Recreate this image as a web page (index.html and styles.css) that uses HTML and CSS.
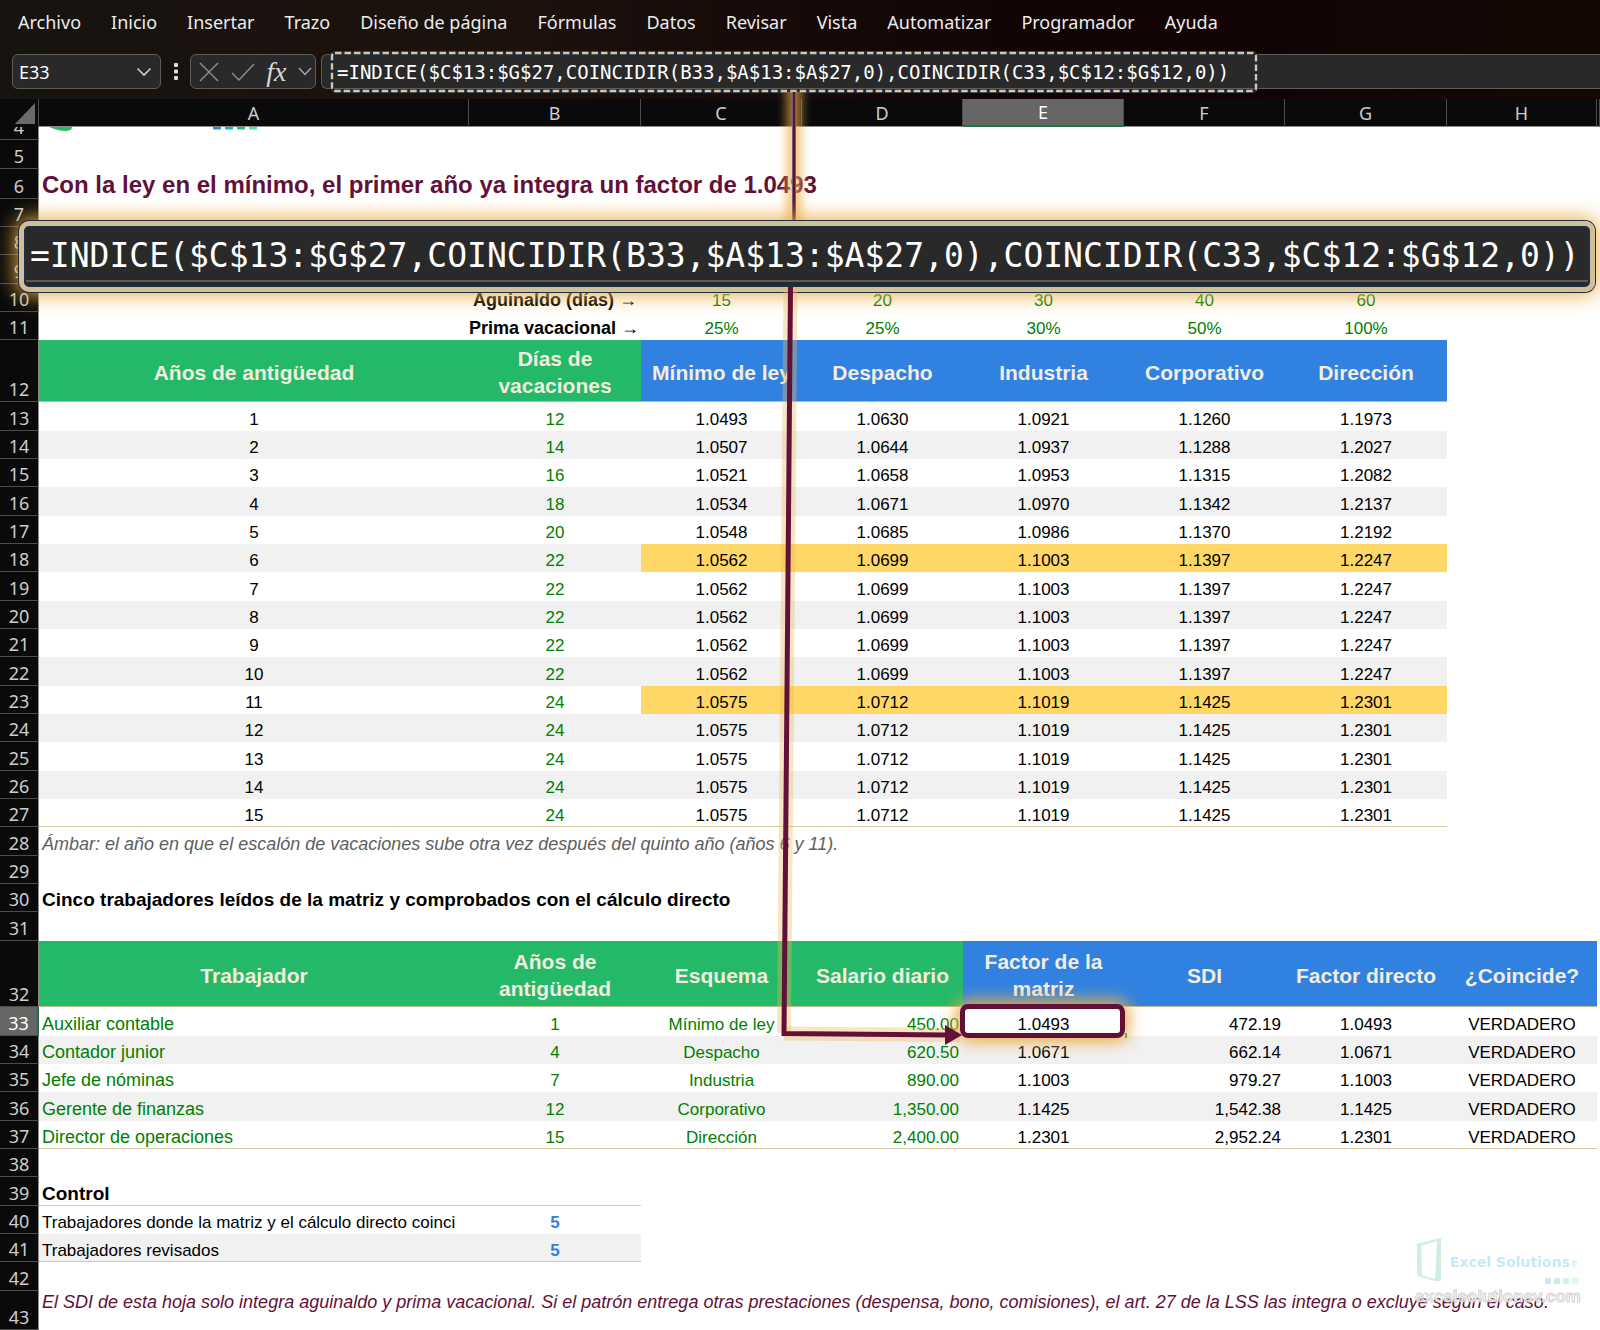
FILE: index.html
```html
<!DOCTYPE html>
<html lang="es">
<head>
<meta charset="utf-8">
<meta name="viewport" content="width=device-width, initial-scale=1">
<title>Factor de integración</title>
<link rel="stylesheet" href="styles.css">
</head>
<body>
<header class="chrome">
  <nav class="menu" aria-label="Cinta de opciones">
    <a href="#">Archivo</a><a href="#">Inicio</a><a href="#">Insertar</a><a href="#">Trazo</a><a href="#">Diseño de página</a><a href="#">Fórmulas</a><a href="#">Datos</a><a href="#">Revisar</a><a href="#">Vista</a><a href="#">Automatizar</a><a href="#">Programador</a><a href="#">Ayuda</a>
  </nav>
  <div class="bar">
    <div class="box namebox">
      <input class="name-input" type="text" value="E33" aria-label="Cuadro de nombres">
      <button class="tool" type="button" aria-label="Lista de nombres"><svg width="16" height="10" viewBox="0 0 16 10"><path d="M1.500 1.500 8 8 14.500 1.500" fill="none" stroke="#cfcfcf" stroke-width="1.600"/></svg></button>
    </div>
    <svg class="dots" width="4" height="18" viewBox="0 0 4 18" fill="#dcdcdc"><rect width="4" height="4" rx="1"/><rect y="6.500" width="4" height="4" rx="1"/><rect y="13" width="4" height="4" rx="1"/></svg>
    <div class="box actions">
      <button class="tool" type="button" aria-label="Cancelar"><svg width="20" height="20" viewBox="0 0 20 20"><path d="M1 1 19 19M19 1 1 19" stroke="#8f8f8f" stroke-width="1.400"/></svg></button>
      <button class="tool" type="button" aria-label="Introducir"><svg width="24" height="18" viewBox="0 0 24 18"><path d="M1 10 8 17 23 1" fill="none" stroke="#8f8f8f" stroke-width="1.400"/></svg></button>
      <button class="tool fx" type="button" aria-label="Insertar función">fx</button>
      <button class="tool" type="button" aria-label="Más funciones"><svg width="14" height="9" viewBox="0 0 14 9"><path d="M1 1 7 7.500 13 1" fill="none" stroke="#a5a5a5" stroke-width="1.500"/></svg></button>
    </div>
    <div class="box formula">
      <input class="formula-input" type="text" aria-label="Barra de fórmulas" value="=INDICE($C$13:$G$27,COINCIDIR(B33,$A$13:$A$27,0),COINCIDIR(C33,$C$12:$G$12,0))">
      <svg class="marquee" width="928" height="42" viewBox="0 0 928 42" fill="none"><rect x="2" y="2" width="924" height="38" rx="3" stroke="#1c2a40" stroke-width="4"/><rect x="2" y="2" width="924" height="38" rx="3" stroke="#d9c6a0" stroke-width="2.400" stroke-dasharray="6.500 3"/></svg>
    </div>
  </div>
</header>

<main class="sheet">
<table class="grid">
  <colgroup><col class="c-num"><col class="c-a"><col class="c-b"><col class="c-m"><col class="c-m"><col class="c-m"><col class="c-m"><col class="c-g"><col class="c-h"><col></colgroup>
  <thead>
    <tr><th class="corner"><svg width="20" height="21" viewBox="0 0 20 21"><path d="M20 0V21H0Z" fill="#6a6a6a"/></svg></th><th>A</th><th>B</th><th>C</th><th>D</th><th class="on">E</th><th>F</th><th>G</th><th>H</th><th></th></tr>
  </thead>
  <tbody>
    <tr class="cut"><th scope="row"><div class="clip">4</div></th><td class="l"><div class="clip"><svg width="220" height="5" viewBox="0 0 220 5"><path d="M7 0H30Q30 4 23 4Q17 4 7 0Z" fill="#25b968"/><path d="M171 0h8v1.500q0 1-1 1h-6q-1 0-1-1Z" fill="#3284e0"/><path d="M183 0h8v1.500q0 1-1 1h-6q-1 0-1-1Z" fill="#18b4bd"/><path d="M195 0h8v1.500q0 1-1 1h-6q-1 0-1-1Z" fill="#25b884"/><path d="M207 0h8v1.500q0 1-1 1h-6q-1 0-1-1Z" fill="#48ee92"/></svg></div></td><td colspan="8"></td></tr>
    <tr class="t"><th scope="row">5</th><td colspan="9"></td></tr>
    <tr class="title"><th scope="row">6</th><td class="l" colspan="9">Con la ley en el mínimo, el primer año ya integra un factor de 1.0493</td></tr>
    <tr><th scope="row">7</th><td colspan="9"></td></tr>
    <tr><th scope="row">8</th><td colspan="9"></td></tr>
    <tr class="t"><th scope="row">9</th><td colspan="9"></td></tr>
    <tr class="param"><th scope="row">10</th><td></td><td class="label">Aguinaldo (días) <span>→</span></td><td>15</td><td>20</td><td>30</td><td>40</td><td>60</td><td></td><td></td></tr>
    <tr class="param"><th scope="row">11</th><td></td><td class="label">Prima vacacional <span>→</span></td><td>25%</td><td>25%</td><td>30%</td><td>50%</td><td>100%</td><td></td><td></td></tr>
    <tr class="head head-12"><th scope="row">12</th><td class="hg">Años de antigüedad</td><td class="hg">Días de vacaciones</td><td class="hb">Mínimo de ley</td><td class="hb">Despacho</td><td class="hb">Industria</td><td class="hb">Corporativo</td><td class="hb">Dirección</td><td></td><td></td></tr>
    <tr class="t m"><th scope="row">13</th><td>1</td><td>12</td><td>1.0493</td><td>1.0630</td><td>1.0921</td><td>1.1260</td><td>1.1973</td><td></td><td></td></tr>
    <tr class="m z"><th scope="row">14</th><td>2</td><td>14</td><td>1.0507</td><td>1.0644</td><td>1.0937</td><td>1.1288</td><td>1.2027</td><td></td><td></td></tr>
    <tr class="m"><th scope="row">15</th><td>3</td><td>16</td><td>1.0521</td><td>1.0658</td><td>1.0953</td><td>1.1315</td><td>1.2082</td><td></td><td></td></tr>
    <tr class="t m z"><th scope="row">16</th><td>4</td><td>18</td><td>1.0534</td><td>1.0671</td><td>1.0970</td><td>1.1342</td><td>1.2137</td><td></td><td></td></tr>
    <tr class="m"><th scope="row">17</th><td>5</td><td>20</td><td>1.0548</td><td>1.0685</td><td>1.0986</td><td>1.1370</td><td>1.2192</td><td></td><td></td></tr>
    <tr class="m z amber"><th scope="row">18</th><td>6</td><td>22</td><td>1.0562</td><td>1.0699</td><td>1.1003</td><td>1.1397</td><td>1.2247</td><td></td><td></td></tr>
    <tr class="t m"><th scope="row">19</th><td>7</td><td>22</td><td>1.0562</td><td>1.0699</td><td>1.1003</td><td>1.1397</td><td>1.2247</td><td></td><td></td></tr>
    <tr class="m z"><th scope="row">20</th><td>8</td><td>22</td><td>1.0562</td><td>1.0699</td><td>1.1003</td><td>1.1397</td><td>1.2247</td><td></td><td></td></tr>
    <tr class="m"><th scope="row">21</th><td>9</td><td>22</td><td>1.0562</td><td>1.0699</td><td>1.1003</td><td>1.1397</td><td>1.2247</td><td></td><td></td></tr>
    <tr class="t m z"><th scope="row">22</th><td>10</td><td>22</td><td>1.0562</td><td>1.0699</td><td>1.1003</td><td>1.1397</td><td>1.2247</td><td></td><td></td></tr>
    <tr class="m amber"><th scope="row">23</th><td>11</td><td>24</td><td>1.0575</td><td>1.0712</td><td>1.1019</td><td>1.1425</td><td>1.2301</td><td></td><td></td></tr>
    <tr class="m z"><th scope="row">24</th><td>12</td><td>24</td><td>1.0575</td><td>1.0712</td><td>1.1019</td><td>1.1425</td><td>1.2301</td><td></td><td></td></tr>
    <tr class="t m"><th scope="row">25</th><td>13</td><td>24</td><td>1.0575</td><td>1.0712</td><td>1.1019</td><td>1.1425</td><td>1.2301</td><td></td><td></td></tr>
    <tr class="m z"><th scope="row">26</th><td>14</td><td>24</td><td>1.0575</td><td>1.0712</td><td>1.1019</td><td>1.1425</td><td>1.2301</td><td></td><td></td></tr>
    <tr class="m end"><th scope="row">27</th><td>15</td><td>24</td><td>1.0575</td><td>1.0712</td><td>1.1019</td><td>1.1425</td><td>1.2301</td><td class="open"></td><td class="open"></td></tr>
    <tr class="t"><th scope="row">28</th><td class="l note" colspan="9">Ámbar: el año en que el escalón de vacaciones sube otra vez después del quinto año (años 6 y 11).</td></tr>
    <tr><th scope="row">29</th><td colspan="9"></td></tr>
    <tr><th scope="row">30</th><td class="l sub" colspan="9">Cinco trabajadores leídos de la matriz y comprobados con el cálculo directo</td></tr>
    <tr class="t"><th scope="row">31</th><td colspan="9"></td></tr>
    <tr class="head head-32"><th scope="row">32</th><td class="hg">Trabajador</td><td class="hg">Años de antigüedad</td><td class="hg">Esquema</td><td class="hg">Salario diario</td><td class="hb">Factor de la matriz</td><td class="hb">SDI</td><td class="hb">Factor directo</td><td class="hb">¿Coincide?</td><td></td></tr>
    <tr class="t w on"><th scope="row">33</th><td>Auxiliar contable</td><td>1</td><td>Mínimo de ley</td><td>450.00</td><td>1.0493</td><td>472.19</td><td>1.0493</td><td>VERDADERO</td><td></td></tr>
    <tr class="w z"><th scope="row">34</th><td>Contador junior</td><td>4</td><td>Despacho</td><td>620.50</td><td>1.0671</td><td>662.14</td><td>1.0671</td><td>VERDADERO</td><td></td></tr>
    <tr class="w"><th scope="row">35</th><td>Jefe de nóminas</td><td>7</td><td>Industria</td><td>890.00</td><td>1.1003</td><td>979.27</td><td>1.1003</td><td>VERDADERO</td><td></td></tr>
    <tr class="t w z"><th scope="row">36</th><td>Gerente de finanzas</td><td>12</td><td>Corporativo</td><td>1,350.00</td><td>1.1425</td><td>1,542.38</td><td>1.1425</td><td>VERDADERO</td><td></td></tr>
    <tr class="w end"><th scope="row">37</th><td>Director de operaciones</td><td>15</td><td>Dirección</td><td>2,400.00</td><td>1.2301</td><td>2,952.24</td><td>1.2301</td><td>VERDADERO</td><td class="open"></td></tr>
    <tr><th scope="row">38</th><td colspan="9"></td></tr>
    <tr class="t end"><th scope="row">39</th><td class="l sub">Control</td><td></td><td class="open" colspan="7"></td></tr>
    <tr class="k"><th scope="row">40</th><td class="l">Trabajadores donde la matriz y el cálculo directo coinci</td><td class="count">5</td><td colspan="7"></td></tr>
    <tr class="k z end"><th scope="row">41</th><td class="l">Trabajadores revisados</td><td class="count">5</td><td class="open" colspan="7"></td></tr>
    <tr class="t"><th scope="row">42</th><td colspan="9"></td></tr>
    <tr class="last"><th scope="row">43</th><td class="l warn" colspan="9">El SDI de esta hoja solo integra aguinaldo y prima vacacional. Si el patrón entrega otras prestaciones (despensa, bono, comisiones), el art. 27 de la LSS las integra o excluye según el caso.</td></tr>
  </tbody>
</table>

<svg class="arrow" width="1000" height="980" viewBox="0 92 1000 980" aria-hidden="true">
  <defs><filter id="soft" filterUnits="userSpaceOnUse" x="760" y="80" width="70" height="160"><feGaussianBlur stdDeviation="5 0"/></filter></defs>
  <path d="M794 92V221" stroke="#e9ae48" stroke-opacity=".65" stroke-width="16" filter="url(#soft)"/>
  <path d="M794 92V221" stroke="#72757c" stroke-width="4"/>
  <path d="M794 92V221" stroke="#621038" stroke-width="2.400"/>
</svg>
<div class="callout">=INDICE($C$13:$G$27,COINCIDIR(B33,$A$13:$A$27,0),COINCIDIR(C33,$C$12:$G$12,0))</div>
<div class="pick"></div>
<svg class="arrow" width="1000" height="980" viewBox="0 92 1000 980" aria-hidden="true">
  <path d="M790.500 287 784 1033" stroke="#e9b85c" stroke-opacity=".36" stroke-width="14"/>
  <path d="M784 1033.500 960 1035" stroke="#e9b85c" stroke-opacity=".36" stroke-width="14"/>
  <path d="M790.500 287 784 1033.500 948 1035" fill="none" stroke="#621038" stroke-width="5"/>
  <path d="M945 1025 962 1035 945 1045Z" fill="#621038"/>
</svg>
<div class="mark">
  <svg width="30" height="46" viewBox="0 0 30 46"><path d="M1 8 29 1 26 3V44Q24 46 20 45L2 40V9ZM6 10 7 39 20 43 22 5Z" fill="#cdeedd" fill-rule="evenodd"/></svg>
  <div class="brand"><div class="brand-name">Excel Solutions<small>®</small></div><svg width="33" height="6" viewBox="0 0 33 6"><rect width="6" height="6" rx="1" fill="#cfe0f8"/><rect x="9" width="6" height="6" rx="1" fill="#c3eaf2"/><rect x="18" width="6" height="6" rx="1" fill="#cdf0de"/><rect x="27" width="6" height="6" rx="1" fill="#d2fbe4"/></svg></div>
  <div class="site">excelsolutionsv.com</div>
</div>
</main>
</body>
</html>
```

FILE: styles.css
```css
* { box-sizing: border-box; }

body {
  margin: 0;
  min-height: 100vh;
  overflow-x: hidden;
  background: #fff;
  font-family: "Liberation Sans", Arial, sans-serif;
  font-size: 17px;
  color: #000;
}

/* Ribbon tabs and formula bar */
.chrome {
  height: 99px;
  background: linear-gradient(90deg, #17130f 0%, #1c110d 32%, #120505 62%, #120404 78%, #150804 100%);
  font-family: "Noto Sans", "Open Sans", sans-serif;
  font-size: 18px;
}
.menu {
  display: flex;
  gap: 30px;
  padding: 8px 18px 0;
  line-height: 28px;
}
.menu a { color: #ececec; text-decoration: none; white-space: nowrap; }

.bar { display: flex; align-items: center; padding: 18px 0 0 12px; }
.box {
  display: flex;
  align-items: center;
  height: 35px;
  border: 1px solid #5c5c5c;
  border-radius: 6px;
  background: #292929;
}
.box input {
  min-width: 0;
  border: 0;
  padding: 0;
  outline: 0;
  background: none;
  color: #fff;
}
.namebox { width: 149px; padding: 0 8px 0 6px; }
.name-input { flex: 1; font: 18px "Noto Sans", sans-serif; }
.tool {
  display: flex;
  align-items: center;
  border: 0;
  padding: 0;
  background: none;
  color: #d6d6d6;
}
.fx { font: italic 28px/30px "Liberation Serif", serif; }
.dots { margin: 0 12px 0 13px; }
.actions { width: 126px; justify-content: space-between; padding: 0 3px 0 8px; }
.formula {
  position: relative;
  flex: 1;
  margin-left: 5px;
  border-right: 0;
  border-radius: 6px 0 0 6px;
  padding-left: 15px;
}
.formula-input { flex: 1; font: 19px "DejaVu Sans Mono", monospace; }
.marquee { position: absolute; left: 8px; top: -4px; }

/* Worksheet */
.sheet { position: relative; }
.grid {
  width: 100%;
  table-layout: fixed;
  border-collapse: separate;
  border-spacing: 0;
}
.c-num { width: 39px; }
.c-a { width: 430px; }
.c-b { width: 172px; }
.c-m { width: 161px; }
.c-g { width: 162px; }
.c-h { width: 150px; }

.grid th, .grid td { padding: 0; overflow: hidden; }
.grid th {
  background: #0a0a0a;
  color: #cdcdcd;
  font: 18px/26px "Noto Sans", "Open Sans", sans-serif;
}
.grid thead th {
  height: 28px;
  border-right: 1px solid #4c4c4c;
  border-bottom: 1px solid #8c8c8c;
}
.grid thead .corner { border-bottom: 0; padding: 0 3px 0 15px; line-height: 0; }
.grid thead th.on { background: #666; color: #fff; border-bottom: 2px solid #217346; }

.grid tbody tr { height: 28px; }
.grid tbody tr.t { height: 29px; }
.grid tbody th {
  border-right: 1px solid #8c8c8c;
  border-bottom: 1px solid #4c4c4c;
  line-height: 24px;
  vertical-align: bottom;
}
.grid tbody .on th { background: #666; color: #fff; border-right: 2px solid #217346; }
.grid td {
  text-align: center;
  vertical-align: bottom;
  line-height: 23px;
  white-space: nowrap;
}
.grid td.l { text-align: left; padding-left: 3px; }

.grid tbody .cut { height: 13px; }
.clip { display: flex; align-items: flex-end; justify-content: center; height: 12px; overflow: hidden; }
td .clip { align-items: flex-start; justify-content: flex-start; height: 13px; }

.grid tbody .title { height: 30px; }
.title td { font-size: 24px; font-weight: bold; line-height: 28px; color: #621038; }
.grid .note { font-size: 18px; font-style: italic; color: #5e5e5e; }
.grid .sub { font-size: 19px; font-weight: bold; line-height: 24px; }
.grid .warn { font-size: 18px; font-style: italic; color: #621038; vertical-align: top; }
.grid .count { font-weight: bold; color: #3182e0; }

.param td { color: #008000; }
.grid .label { color: #000; font-size: 18px; font-weight: bold; text-align: right; padding-right: 4px; }
.label span { font-weight: normal; }

.grid tbody .head-12 { height: 62px; }
.grid tbody .head-32 { height: 66px; }
.head td { vertical-align: middle; white-space: normal; }
.head .hg, .head .hb {
  padding-top: 2px;
  box-shadow: inset 0 -1px #b9bd90;
  font-size: 21px;
  font-weight: bold;
  line-height: 27px;
  color: #f3ecdf;
}
.hg { background: #24b968; }
.hb { background: #3182e0; }

.z td:not([colspan]) { background: #f1f1f1; }
.m td:nth-child(n+9), .k td:nth-child(n+4) { background: #fff; }
.w td:nth-child(10) { background: #fff; }
.m td:nth-child(3) { color: #008000; }
.amber td:nth-child(n+4):nth-child(-n+8) { background: #fed766; }
.w td:nth-child(-n+5) { color: #008000; }
.w td:nth-child(2) { text-align: left; padding-left: 3px; font-size: 18px; }
.w td:nth-child(5), .w td:nth-child(7) { text-align: right; padding-right: 4px; }
.end td { box-shadow: inset 0 -1px #d9c8a4; }
.end td.open { box-shadow: none; }
.grid tbody .last { height: 39px; }

/* Annotations over the cells */
.callout {
  position: absolute;
  left: 19px;
  right: 5px;
  top: 122px;
  height: 71px;
  padding-left: 6px;
  border: 5px solid #d3bf96;
  border-radius: 10px;
  background: linear-gradient(#292929 0 54px, #5d5959 54px 56px, #292929 56px);
  box-shadow: inset 0 0 0 2px #1d2e48, 0 0 0 1px #1d2e48, 0 0 20px 3px #e9ae48;
  color: #fff;
  font: 33px/60px "DejaVu Sans Mono", monospace;
  white-space: nowrap;
}
.pick {
  position: absolute;
  left: 960px;
  top: 905px;
  width: 165px;
  height: 34px;
  border: 5px solid #621038;
  border-radius: 8px;
  box-shadow: 0 0 16px 4px #e9ae48;
}
.pick::after {
  content: "";
  position: absolute;
  right: -7px;
  bottom: -5px;
  width: 2px;
  height: 5px;
  background: #8f9c4a;
}
.arrow { position: absolute; left: 0; top: -7px; }

.mark {
  position: absolute;
  right: 22px;
  bottom: 20px;
  width: 163px;
  display: flex;
  flex-wrap: wrap;
  gap: 0 4px;
  opacity: .9;
}
.brand { flex: 1; display: flex; flex-direction: column; align-items: flex-end; gap: 4px; padding-top: 17px; }
.brand-name { font: bold 14px/18px "DejaVu Sans", Verdana, sans-serif; color: #bfe7f6; white-space: nowrap; }
.brand-name small { font-size: 8px; font-weight: normal; }
.site {
  font-size: 17px;
  font-weight: bold;
  line-height: 26px;
  color: #f4f4f4;
  -webkit-text-stroke: 1px #cfcfcf;
}
```
